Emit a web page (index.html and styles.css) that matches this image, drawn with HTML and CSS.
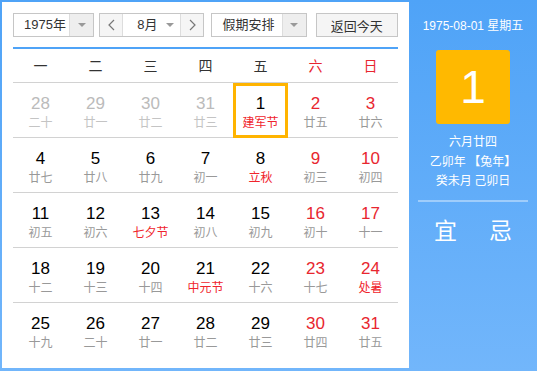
FILE: index.html
```html
<!DOCTYPE html>
<html>

<head>
	<title>万年历</title>
	<link rel="stylesheet" href="styles.css">
</head>

<body>
	<div class="calendar">
		<div class="main">
			<!-- 顶部控制栏 -->
			<div class="toolbar">
				<div class="select year">
					<span class="label">1975年</span>
					<span class="arrow"><i></i></span>
				</div>
				<div class="select month">
					<span class="nav"><svg width="7" height="12" viewBox="0 0 7 12"><polyline points="6,1 1,6 6,11" fill="none" stroke="#777" stroke-width="1.2"/></svg></span>
					<span class="label">8月</span>
					<span class="arrow plain"><i></i></span>
					<span class="nav"><svg width="7" height="12" viewBox="0 0 7 12"><polyline points="1,1 6,6 1,11" fill="none" stroke="#777" stroke-width="1.2"/></svg></span>
				</div>
				<div class="select holiday">
					<span class="label">假期安排</span>
					<span class="arrow"><i></i></span>
				</div>
				<button class="today">返回今天</button>
			</div>

			<div class="week">
				<span>一</span><span>二</span><span>三</span><span>四</span><span>五</span>
				<span class="we">六</span><span class="we">日</span>
			</div>

			<div class="days">
				<div class="day other"><b>28</b><em>二十</em></div>
				<div class="day other"><b>29</b><em>廿一</em></div>
				<div class="day other"><b>30</b><em>廿二</em></div>
				<div class="day other"><b>31</b><em>廿三</em></div>
				<div class="day selected"><b>1</b><em class="fest">建军节</em></div>
				<div class="day we"><b>2</b><em>廿五</em></div>
				<div class="day we"><b>3</b><em>廿六</em></div>

				<div class="day"><b>4</b><em>廿七</em></div>
				<div class="day"><b>5</b><em>廿八</em></div>
				<div class="day"><b>6</b><em>廿九</em></div>
				<div class="day"><b>7</b><em>初一</em></div>
				<div class="day"><b>8</b><em class="fest">立秋</em></div>
				<div class="day we"><b>9</b><em>初三</em></div>
				<div class="day we"><b>10</b><em>初四</em></div>

				<div class="day"><b>11</b><em>初五</em></div>
				<div class="day"><b>12</b><em>初六</em></div>
				<div class="day"><b>13</b><em class="fest">七夕节</em></div>
				<div class="day"><b>14</b><em>初八</em></div>
				<div class="day"><b>15</b><em>初九</em></div>
				<div class="day we"><b>16</b><em>初十</em></div>
				<div class="day we"><b>17</b><em>十一</em></div>

				<div class="day"><b>18</b><em>十二</em></div>
				<div class="day"><b>19</b><em>十三</em></div>
				<div class="day"><b>20</b><em>十四</em></div>
				<div class="day"><b>21</b><em class="fest">中元节</em></div>
				<div class="day"><b>22</b><em>十六</em></div>
				<div class="day we"><b>23</b><em>十七</em></div>
				<div class="day we"><b>24</b><em class="fest">处暑</em></div>

				<div class="day"><b>25</b><em>十九</em></div>
				<div class="day"><b>26</b><em>二十</em></div>
				<div class="day"><b>27</b><em>廿一</em></div>
				<div class="day"><b>28</b><em>廿二</em></div>
				<div class="day"><b>29</b><em>廿三</em></div>
				<div class="day we"><b>30</b><em>廿四</em></div>
				<div class="day we"><b>31</b><em>廿五</em></div>
			</div>
		</div>

		<!-- 右侧当日信息 -->
		<div class="side">
			<div class="side-date">1975-08-01 星期五</div>
			<div class="big-day">1</div>
			<div class="lunar">
				<div>六月廿四</div>
				<div>乙卯年 【兔年】</div>
				<div>癸未月 己卯日</div>
			</div>
			<div class="divider"></div>
			<div class="yiji">
				<span>宜</span>
				<span>忌</span>
			</div>
		</div>
	</div>
</body>

</html>
```

FILE: styles.css
```css
body {
	margin: 0;
	font-family: "Liberation Sans", "Noto Sans CJK SC", sans-serif;
}

.calendar {
	display: flex;
	width: 537px;
	height: 371px;
	background: linear-gradient(to bottom, #4fa3f7, #72b6fb);
}

/* 左侧日历 */
.main {
	width: 385px;
	margin: 2px 0 3px 2px;
	padding: 11px 11px 0 11px;
	background-color: #fff;
}

.toolbar {
	display: flex;
	gap: 7px;
	border-bottom: 2px solid #4fa3f7;
	padding-bottom: 10px;
	align-items: stretch;
	height: 24px;
}

.select {
	display: flex;
	border: 1px solid #c6c6c6;
	font-size: 13px;
	color: #333;
	line-height: 22px;
}

.select .label {
	flex: 1;
	padding-left: 10px;
}

.year {
	width: 80px;
}

.month {
	width: 104px;
	margin-left: -2px;
}

.month .label {
	padding-left: 14px;
}

.holiday {
	width: 94px;
}

.arrow {
	display: flex;
	width: 23px;
	align-items: center;
	justify-content: center;
	background-color: #eee;
	border-left: 1px solid #ddd;
}

.arrow.plain {
	background: none;
	border: none;
	width: 20px;
}

.arrow i {
	border-top: 4px solid #999;
	border-left: 4px solid transparent;
	border-right: 4px solid transparent;
}

.nav {
	display: flex;
	width: 22px;
	align-items: center;
	justify-content: center;
	background-color: #f5f5f5;
}

.nav:first-child {
	border-right: 1px solid #ddd;
}

.nav:last-child {
	border-left: 1px solid #ddd;
}

.today {
	width: 83px;
	margin-left: 2px;
	border: 1px solid #c6c6c6;
	background-color: #f5f5f5;
	font-family: "Noto Sans CJK SC", sans-serif;
	font-size: 13px;
	color: #333;
	padding: 0;
}

/* 星期栏 */
.week {
	display: grid;
	grid-template-columns: repeat(7, 55px);
	height: 33px;
	line-height: 33px;
	border-bottom: 1px solid #d2d2d2;
	text-align: center;
	font-family: "Noto Sans CJK SC", sans-serif;
	font-size: 14px;
	color: #333;
}

.week .we {
	color: #e8262f;
}

/* 日期格子 */
.days {
	display: grid;
	grid-template-columns: repeat(7, 55px);
}

.day {
	display: flex;
	flex-direction: column;
	align-items: center;
	height: 55px;
	box-sizing: border-box;
	padding-top: 11px;
	border-bottom: 1px solid #d2d2d2;
}

.day:nth-last-child(-n+7) {
	border-bottom: none;
}

.day b {
	font-weight: normal;
	font-size: 17px;
	line-height: 20px;
	color: #000;
}

.day em {
	font-style: normal;
	font-family: "Noto Sans CJK SC", sans-serif;
	font-size: 12px;
	line-height: 16px;
	color: #999;
}

.day.we b {
	color: #e8262f;
}

.day.other b {
	color: #bbb;
}

.day.other em {
	color: #c4c4c4;
}

.day em.fest {
	color: #f0242c;
}

.day.selected {
	border: 3px solid #ffb400;
	padding-top: 8px;
}

/* 右侧面板 */
.side {
	flex: 1;
	display: flex;
	flex-direction: column;
	align-items: center;
	padding-top: 16px;
	color: #fff;
}

.side-date {
	font-size: 12px;
	line-height: 20px;
}

.big-day {
	width: 74px;
	height: 74px;
	margin-top: 14px;
	border-radius: 3px;
	background-color: #ffb900;
	text-align: center;
	font-size: 46px;
	line-height: 74px;
}

.lunar {
	margin-top: 7px;
	text-align: center;
	font-family: "Noto Sans CJK SC", sans-serif;
	font-size: 12px;
	line-height: 19.5px;
}

.divider {
	width: 110px;
	height: 2px;
	margin-top: 10px;
	background-color: #9fcdfb;
}

.yiji {
	display: flex;
	gap: 32px;
	margin-top: 12px;
	font-family: "Noto Sans CJK SC", sans-serif;
	font-size: 23px;
	line-height: 30px;
}
```
